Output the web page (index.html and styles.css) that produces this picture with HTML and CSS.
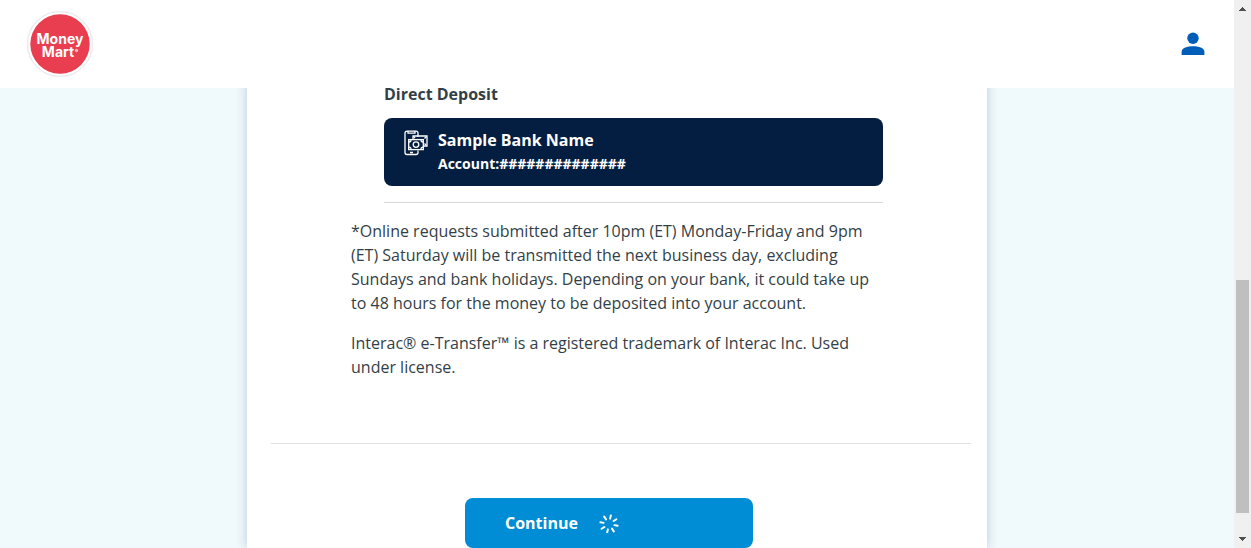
FILE: index.html
```html
<!DOCTYPE html>
<html lang="en">
<head>
<meta charset="utf-8">
<meta name="viewport" content="width=device-width, initial-scale=1">
<title>Money Mart</title>
<link rel="stylesheet" href="styles.css">
</head>
<body>
<div class="app">
  <div class="page">
    <header class="header">
      <a class="logo" href="#" aria-label="Money Mart">
        <svg width="68" height="68" viewBox="0 0 68 68">
          <circle cx="34" cy="34" r="32.5" fill="#fff" stroke="#ececed" stroke-width="1.500"/>
          <circle cx="34" cy="34" r="29.700" fill="#e93d50"/>
          <text class="logo-text" text-anchor="middle"><tspan x="34" y="34">Money</tspan><tspan x="32" y="47">Mart</tspan></text>
          <circle cx="50.500" cy="40.500" r="1.200" fill="#f6a9b1" stroke="#fff" stroke-width=".6"/>
        </svg>
      </a>
      <button class="account" type="button" aria-label="Account">
        <svg width="24" height="24" viewBox="0 0 24 24" fill="#005eb8">
          <ellipse cx="12" cy="6.2" rx="5.7" ry="5.7"/>
          <path d="M.6 23v-3.2C.6 16 6.500 14.300 12 14.300S23.400 16 23.400 19.800V23z"/>
        </svg>
      </button>
    </header>
    <main class="card">
      <section class="deposit">
        <h2 class="heading">Direct Deposit</h2>
        <div class="bank">
          <svg class="bank-icon" width="24" height="26" viewBox="0 0 24 26" fill="none" stroke="#fff" stroke-width="1.300">
            <path d="M14 7V3Q14 1.200 12 1.200H3Q1 1.200 1 3.200V22.500Q1 24.500 3 24.500H12Q14 24.500 14 22.500V20.500M4 1.500V3.200H11V1.500M6 22.500H9"/>
            <path d="M9 9V6H23V16H20"/>
            <path d="M20.500 8.500L22 7M20.500 13.500L22 15M9.500 6.500L11 8"/>
            <rect x="4.700" y="9.600" width="14.600" height="10"/>
            <circle cx="12" cy="14.600" r="2.800"/>
            <path d="M5 12Q7 12 7 10M17 10Q17 12 19 12M5 17.200Q7 17.200 7 19.200M17 19.200Q17 17.200 19 17.200"/>
          </svg>
          <div>
            <p class="bank-name">Sample Bank Name</p>
            <p class="bank-account">Account:##############</p>
          </div>
        </div>
      </section>
      <section class="notes">
        <p>*Online requests submitted after 10pm (ET) Monday-Friday and 9pm (ET) Saturday will be transmitted the next business day, excluding Sundays and bank holidays. Depending on your bank, it could take up to 48 hours for the money to be deposited into your account.</p>
        <p>Interac® e-Transfer™ is a registered trademark of Interac Inc. Used under license.</p>
      </section>
      <div class="actions">
        <button class="continue" type="button">Continue
          <svg width="20" height="20" viewBox="-10 -11 20 20" stroke="#fff" stroke-width="2" stroke-linecap="round">
            <g transform="rotate(12)">
              <path d="M0-5.500V-8.800M0 5.500V8.800M5.500 0H8.800M-5.500 0H-8.800M3.900-3.900L6.200-6.200M-3.900 3.900L-6.200 6.200M3.900 3.900L6.200 6.200M-3.900-3.900L-6.200-6.200"/>
            </g>
          </svg>
        </button>
      </div>
    </main>
  </div>
  <div class="scrollbar" aria-hidden="true">
    <svg width="17" height="17" viewBox="0 0 17 17" fill="#505050" shape-rendering="crispEdges"><path d="M8 7h1v1h1v1h1v1h1v1H5v-1h1V9h1V8h1z"/></svg>
    <div class="track"><div class="thumb"></div></div>
    <svg width="17" height="17" viewBox="0 0 17 17" fill="#505050" shape-rendering="crispEdges"><path d="M5 6h7v1h-1v1h-1v1H9v1H8V9H7V8H6V7H5z"/></svg>
  </div>
</div>
</body>
</html>
```

FILE: styles.css
```css
* {
  box-sizing: border-box;
}

body {
  margin: 0;
  color: #333f48;
  font-family: "Open Sans", "Noto Sans", sans-serif;
  font-size: 16px;
  line-height: 24px;
}

h2,
p {
  margin: 0;
}

svg {
  display: block;
  flex: none;
}

.app {
  display: flex;
  height: 100vh;
  overflow: hidden;
}

.page {
  display: flex;
  flex: 1;
  flex-direction: column;
  min-width: 0;
  background: #f0f9fc;
}

.header {
  position: relative;
  z-index: 1;
  display: flex;
  flex: none;
  align-items: center;
  justify-content: space-between;
  padding: 10px 29px 10px 26px;
  background: #fff;
}

.logo-text {
  fill: #fff;
  font-family: Inter, sans-serif;
  font-size: 14px;
  font-weight: 700;
}

.account {
  padding: 0;
  border: 0;
  background: none;
}

.card {
  flex: 1 0 auto;
  width: 100%;
  max-width: 740px;
  margin: -8px auto 0;
  padding: 2px 16px 0 24px;
  background: #fff;
  box-shadow: 0 0 10px #b4ccd6;
}

.deposit {
  margin: 0 88px 0 113px;
  padding-bottom: 16px;
  border-bottom: 1px solid #d6d6d6;
}

.heading {
  margin-bottom: 12px;
  font-size: 16px;
  font-weight: 700;
}

.bank {
  display: flex;
  gap: 10px;
  padding: 10px 20px;
  border-radius: 8px;
  background: #041e42;
  color: #fff;
  font-weight: 700;
}

.bank-icon {
  margin-top: 2px;
}

.bank-account {
  font-size: 14px;
}

.notes {
  display: grid;
  gap: 16px;
  margin: 16px 96px 64px 80px;
}

.actions {
  display: flex;
  justify-content: center;
  padding: 54px 24px 0 0;
  border-top: 1px solid #e2e2e2;
}

.continue {
  display: flex;
  align-items: center;
  gap: 21px;
  width: 288px;
  height: 50px;
  padding: 0 40px;
  border: 0;
  border-radius: 8px;
  background: #008dd5;
  color: #fff;
  font: 700 16px/24px "Open Sans", "Noto Sans", sans-serif;
}

.scrollbar {
  display: flex;
  flex: none;
  flex-direction: column;
  width: 17px;
  background: #f0f0f0;
}

.track {
  display: flex;
  flex: 1;
  align-items: flex-end;
  padding: 0 2px 18px;
}

.thumb {
  width: 100%;
  height: 47%;
  background: #bfbfbf;
}
```
